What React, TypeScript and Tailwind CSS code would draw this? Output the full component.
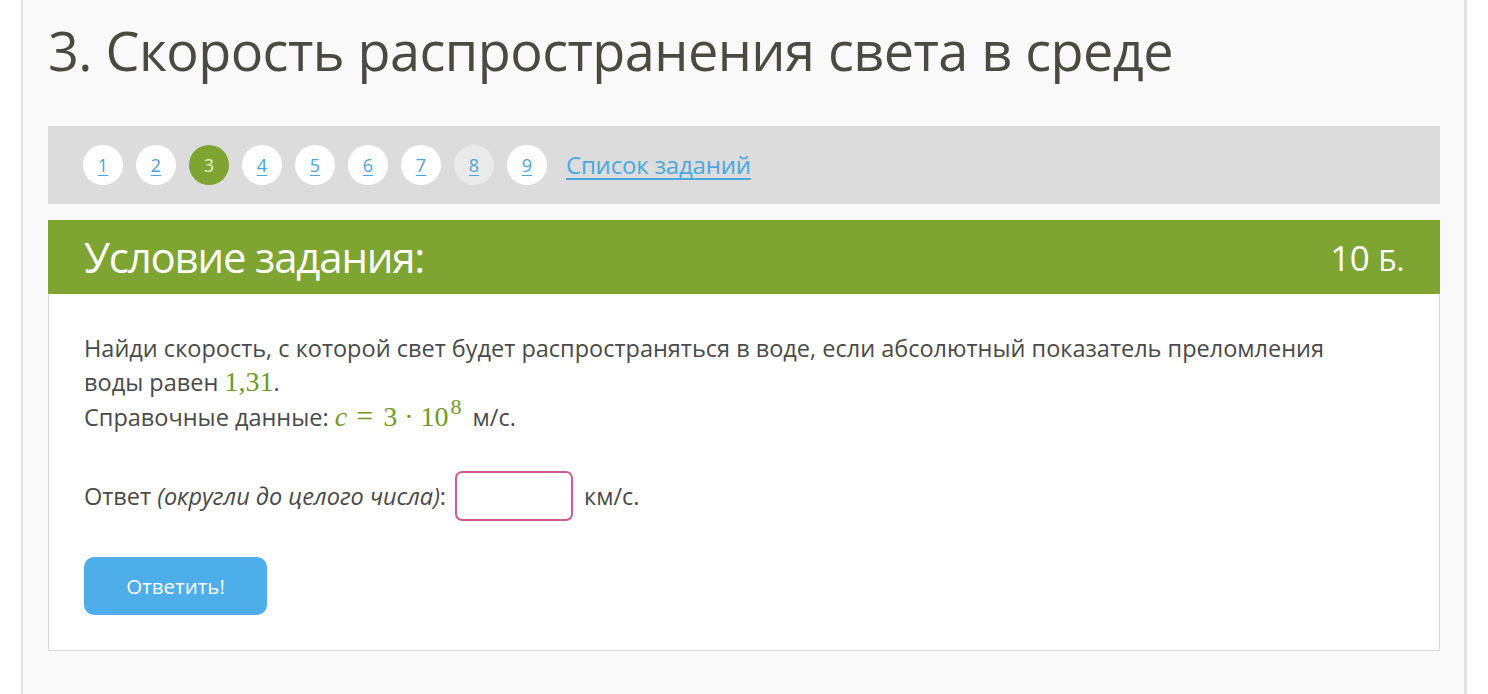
import React from "react";

const nums = ["1", "2", "3", "4", "5", "6", "7", "8", "9"];

export default function App() {
  return (
    <div
      className="w-[1488px] h-[694px] overflow-hidden bg-white flex"
      style={{ fontFamily: '"Open Sans", "Noto Sans", sans-serif' }}
    >
      <div className="ml-[21px] w-[1446px] h-full bg-[#f9f9f9] border-l-[2px] border-r-[3px] border-[#e2e2e4] pl-[25px] pr-[24px]">
        <h1 className="pt-[18px] h-[126px] text-[54px] leading-[64px] text-[#4a4a40] tracking-[-0.55px]">
          3. Скорость распространения света в среде
        </h1>
        <div className="h-[78px] bg-[#dcdcdc] flex items-center pl-[35px] gap-[13px]">
          {nums.map((n) => (
            <div
              key={n}
              className={
                "w-[40px] h-[40px] rounded-full flex items-center justify-center text-[18px] " +
                (n === "3"
                  ? "bg-[#7ea432] text-[#e8f3c8]"
                  : n === "8"
                  ? "bg-[#eaeaea] text-[#4aa3dc] underline underline-offset-[3px]"
                  : "bg-white text-[#4aa3dc] underline underline-offset-[3px]")
              }
            >
              {n}
            </div>
          ))}
          <a className="ml-[6px] text-[24px] text-[#4aa8e0] underline underline-offset-[4px] leading-none tracking-[-0.2px]">
            Список заданий
          </a>
        </div>
        <div className="mt-[16px] h-[74px] bg-[#7ea432] flex items-center justify-between px-[36px]">
          <span className="text-[42px] text-white leading-none tracking-[-1.2px]">Условие задания:</span>
          <span className="text-[35px] text-white leading-none tracking-[-0.3px]">
            10 <span className="text-[30px]">Б.</span>
          </span>
        </div>
        <div className="bg-white border border-t-0 border-[#d8d8d8] h-[357px] pl-[35px] pt-[37px] text-[23.5px] leading-[34px] text-[#4a4a4a]">
          <p>
            Найди скорость, с которой свет будет распространяться в воде, если абсолютный показатель преломления
            <br />
            воды равен{" "}
            <span className="text-[#6f9a24] text-[28px]" style={{ fontFamily: '"Liberation Serif", serif' }}>
              1,31
            </span>
            .
            <br />
            Справочные данные:{" "}
            <span
              className="inline-flex items-baseline text-[#6f9a24] text-[28px] leading-[34px] mr-[5px]"
              style={{ fontFamily: '"Liberation Serif", serif' }}
            >
              <i>c</i>
              <span className="ml-[9px] mr-[10px] text-[30px]">=</span>
              <span>3</span>
              <span className="mx-[7px]">·</span>
              <span>10</span>
              <span className="text-[22px] relative -top-[12px] ml-[2px]">8</span>
            </span>{" "}
            м/с.
          </p>
          <div className="mt-[35px] flex items-center h-[50px]">
            <span>
              Ответ <i>(округли до целого числа)</i>:
            </span>
            <div className="ml-[9px] w-[118px] h-[50px] border-[2px] border-[#d05a92] rounded-[7px] bg-white" />
            <span className="ml-[11px]">км/с.</span>
          </div>
          <button className="mt-[36px] w-[183px] h-[58px] bg-[#4daee9] rounded-[10px] text-white text-[20.5px]">
            Ответить!
          </button>
        </div>
      </div>
    </div>
  );
}
